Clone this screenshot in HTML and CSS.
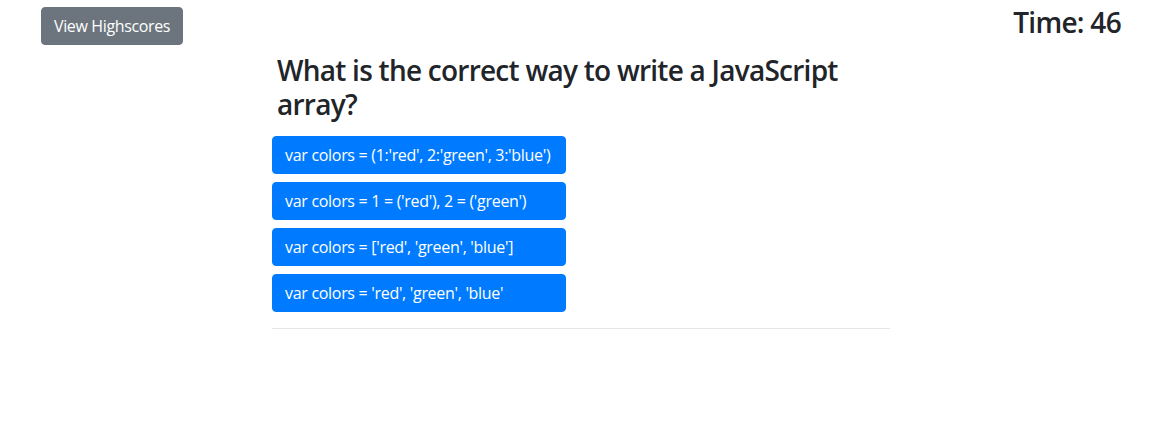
FILE: index.html
```html
<!DOCTYPE html>
<html lang="en">
<head>
<meta charset="utf-8">
<title>Code Quiz</title>
<link rel="stylesheet" href="styles.css">
</head>
<body>
<header class="topbar">
  <button class="btn btn-secondary">View Highscores</button>
  <h3 class="timer">Time: 46</h3>
</header>
<main class="quiz">
  <h3 class="question">What is the correct way to write a JavaScript array?</h3>
  <div class="choices">
    <button class="btn btn-primary choice">var colors = (1:'red', 2:'green', 3:'blue')</button>
    <button class="btn btn-primary choice">var colors = 1 = ('red'), 2 = ('green')</button>
    <button class="btn btn-primary choice">var colors = ['red', 'green', 'blue']</button>
    <button class="btn btn-primary choice">var colors = 'red', 'green', 'blue'</button>
  </div>
  <hr class="divider">
</main>
</body>
</html>
```
FILE: styles.css
```css
* { box-sizing: border-box; }
html, body {
  margin: 0;
  padding: 0;
  background: #fff;
  color: #212529;
  font-family: "Open Sans", "Noto Sans", "Liberation Sans", sans-serif;
  font-size: 16px;
  line-height: 1.5;
}
.topbar {
  display: flex;
  justify-content: space-between;
  align-items: flex-start;
  padding: 7px 32px 0 41px;
}
.btn {
  display: inline-block;
  font-family: inherit;
  font-size: 16px;
  line-height: 1.5;
  font-weight: 400;
  letter-spacing: -0.3px;
  padding: 6px 12px;
  border: 1px solid transparent;
  border-radius: 4px;
  color: #fff;
  text-align: left;
  cursor: pointer;
}
.btn-secondary {
  background: #6c757d;
  border-color: #6c757d;
  height: 38px;
  letter-spacing: -0.36px;
}
.btn-primary {
  background: #007bff;
  border-color: #007bff;
}
.timer {
  margin: -1px 0 0 0;
  font-size: 28px;
  font-weight: 600;
  letter-spacing: -0.7px;
  line-height: 1.2;
}
.quiz {
  margin: 0 0 0 272px;
  width: 618px;
}
.question {
  margin: 9px 0 15px 0;
  padding-left: 5px;
  font-size: 28px;
  font-weight: 600;
  letter-spacing: -0.75px;
  line-height: 1.2;
}
.choices {
  display: flex;
  flex-direction: column;
  gap: 8px;
  align-items: flex-start;
}
.choice {
  width: 294px;
  height: 38px;
  white-space: nowrap;
}
.divider {
  margin: 16px 0 0 0;
  border: 0;
  border-top: 1px solid rgba(0,0,0,.1);
}
```
